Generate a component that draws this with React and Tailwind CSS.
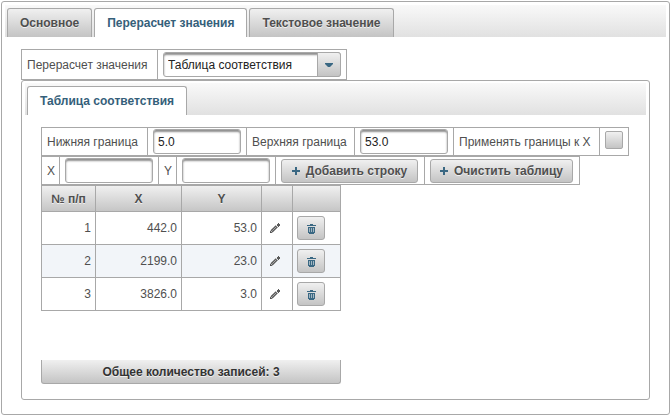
import { useState } from "react";
import clsx from "clsx";

const ROWS = [
  { id: 1, x: "442.0", y: "53.0" },
  { id: 2, x: "2199.0", y: "23.0" },
  { id: 3, x: "3826.0", y: "3.0" },
];

const TABS = ["Основное", "Перерасчет значения", "Текстовое значение"];

const PlusIcon = () => (
  <svg width="8" height="8" viewBox="0 0 8 8" fill="#3a6883" shapeRendering="crispEdges" className="mt-px shrink-0" aria-hidden="true">
    <path d="M3 0h2v3h3v2H5v3H3V5H0V3h3z" />
  </svg>
);

const PencilIcon = () => (
  <svg width="10" height="10" viewBox="0 0 10 10" aria-hidden="true">
    <path d="M1.6 8.4 6.8 3.2" stroke="#5a5a5a" strokeWidth="3" />
    <path d="M2.2 7.8 6.4 3.6" stroke="#b0b0b0" strokeWidth="0.9" />
    <path d="M0 10V7.4L2.6 10z" fill="#4f4f4f" />
    <path d="M7 1h1V0h1v1h1v2H9v1H8V3H7z" fill="#5a5a5a" />
  </svg>
);

const TrashIcon = () => (
  <svg width="9" height="10" viewBox="0 0 9 10" fill="#3a6883" shapeRendering="crispEdges" className="mt-0.5" aria-hidden="true">
    <path d="M3 0h3v1h3v1H0V1h3z" />
    <path d="M1 3h7v6H7v1H2V9H1z" />
    <path d="M2 4h1v4H2zM4 4h1v4H4zM6 4h1v4H6z" fill="#a3b6c1" />
  </svg>
);

function TabBar({ tabs, active, onSelect }) {
  return (
    <div role="tablist" className="flex h-8 items-end gap-0.5 bg-linear-to-b from-[#f9f9f9] to-[#e1e1e1] pl-0.5">
      {tabs.map((tab) => (
        <button
          key={tab}
          type="button"
          role="tab"
          aria-selected={tab === active}
          onClick={() => onSelect?.(tab)}
          className={clsx(
            "h-[29px] rounded-t-[3px] border border-b-0 border-[#a8a8a8] px-3 font-bold whitespace-nowrap",
            tab === active
              ? "bg-white text-[#35607a]"
              : "bg-linear-to-b from-[#f0f0f0] to-[#c4c4c4] text-[#4f4f4f] text-shadow-[0_1px_0_rgba(255,255,255,0.7)]"
          )}
        >
          {tab}
        </button>
      ))}
    </div>
  );
}

function Button({ className, children, ...props }) {
  return (
    <button
      type="button"
      className={clsx(
        "flex h-6 items-center justify-center rounded-[3px] border border-[#a8a8a8] bg-linear-to-b from-[#f0f0f0] to-[#c4c4c4] font-bold whitespace-nowrap text-[#4f4f4f] text-shadow-[0_1px_0_rgba(255,255,255,0.7)]",
        className
      )}
      {...props}
    >
      {children}
    </button>
  );
}

function FormRow({ children }) {
  return <div className="flex w-fit border-y border-l border-[#a8a8a8]">{children}</div>;
}

function Cell({ className, children }) {
  return (
    <div className={clsx("flex min-h-[27px] items-center border-r border-[#a8a8a8] px-[5px] py-px whitespace-nowrap", className)}>
      {children}
    </div>
  );
}

function TextInput(props) {
  return (
    <input
      type="text"
      className="h-[25px] w-[88px] rounded-[3px] border border-[#a8a8a8] bg-white px-1 text-[#222222] shadow-[inset_0_2px_2px_#8f8f8f] outline-none"
      {...props}
    />
  );
}

export default function App() {
  const [tab, setTab] = useState(TABS[1]);

  return (
    <div className="pt-px pl-px font-['Liberation_Sans',Arial,sans-serif] text-xs text-[#4f4f4f]">
      <div className="rounded-[3px] border border-[#a8a8a8] px-[3px] pt-[3px] pb-3.5">
        <TabBar tabs={TABS} active={tab} onSelect={setTab} />

        <div className="px-4 pt-3">
          <FormRow>
            <Cell className="w-[136px]">
              <label htmlFor="mode">Перерасчет значения</label>
            </Cell>
            <Cell className="h-[29px]">
              <div className="relative w-[178px]">
                <select
                  id="mode"
                  className="block h-[25px] w-full appearance-none rounded-[3px] border border-[#a8a8a8] bg-white pr-6 pl-1 text-[#222222] shadow-[inset_0_2px_2px_#8f8f8f] outline-none"
                >
                  <option>Таблица соответствия</option>
                </select>
                <span className="pointer-events-none absolute inset-y-0 right-0 flex w-6 items-center justify-center rounded-r-[3px] border border-[#a8a8a8] bg-linear-to-b from-[#f0f0f0] to-[#c4c4c4]">
                  <svg width="8" height="4" viewBox="0 0 8 4" fill="#3a6883" aria-hidden="true">
                    <path d="M0 0h8v1L5 4H3L0 1z" />
                  </svg>
                </span>
              </div>
            </Cell>
          </FormRow>

          <div className="rounded-[3px] border border-[#a8a8a8] px-[3px] pt-0.5 pb-[15px]">
            <TabBar tabs={["Таблица соответствия"]} active="Таблица соответствия" />

            <div className="px-4 pt-3">
              <FormRow>
                <Cell className="w-[106px]">
                  <label htmlFor="low">Нижняя граница</label>
                </Cell>
                <Cell>
                  <TextInput id="low" defaultValue="5.0" />
                </Cell>
                <Cell className="w-[108px]">
                  <label htmlFor="high">Верхняя граница</label>
                </Cell>
                <Cell>
                  <TextInput id="high" defaultValue="53.0" />
                </Cell>
                <Cell className="w-[146px]">
                  <label htmlFor="apply">Применять границы к X</label>
                </Cell>
                <Cell className="w-[29px]">
                  <input
                    id="apply"
                    type="checkbox"
                    className="mb-1 size-[18px] shrink-0 appearance-none rounded-[2px] border border-[#a8a8a8] bg-linear-to-b from-[#f0f0f0] to-[#c4c4c4]"
                  />
                </Cell>
              </FormRow>

              <FormRow>
                <Cell className="w-[18px]">
                  <label htmlFor="x">X</label>
                </Cell>
                <Cell>
                  <TextInput id="x" />
                </Cell>
                <Cell className="w-[18px]">
                  <label htmlFor="y">Y</label>
                </Cell>
                <Cell>
                  <TextInput id="y" />
                </Cell>
                <Cell className="w-[149px]">
                  <Button className="w-[137px] gap-1.5">
                    <PlusIcon />
                    Добавить строку
                  </Button>
                </Cell>
                <Cell className="w-[155px]">
                  <Button className="w-[143px] gap-1.5">
                    <PlusIcon />
                    Очистить таблицу
                  </Button>
                </Cell>
              </FormRow>

              <table className="w-[300px] table-fixed border-collapse [&_td]:border [&_td]:border-[#a8a8a8] [&_th]:border [&_th]:border-[#a8a8a8]">
                <colgroup>
                  <col className="w-[54px]" />
                  <col className="w-[86px]" />
                  <col className="w-20" />
                  <col className="w-[31px]" />
                  <col />
                </colgroup>
                <thead>
                  <tr className="h-[26px] bg-linear-to-b from-[#f0f0f0] to-[#c4c4c4] text-shadow-[0_1px_0_rgba(255,255,255,0.7)]">
                    <th>№ п/п</th>
                    <th>X</th>
                    <th>Y</th>
                    <th></th>
                    <th></th>
                  </tr>
                </thead>
                <tbody>
                  {ROWS.map((row) => (
                    <tr key={row.id} className="h-[33px] even:bg-[#f2f5f9]">
                      <td className="pr-1 text-right">{row.id}</td>
                      <td className="pr-1 text-right">{row.x}</td>
                      <td className="pr-1 text-right">{row.y}</td>
                      <td className="pl-2">
                        <button type="button" aria-label="Изменить" className="block">
                          <PencilIcon />
                        </button>
                      </td>
                      <td className="pl-1">
                        <Button aria-label="Удалить" className="w-7">
                          <TrashIcon />
                        </Button>
                      </td>
                    </tr>
                  ))}
                </tbody>
              </table>

              <div className="mt-[49px] flex h-6 w-[300px] items-center justify-center rounded-b-[3px] border border-t-0 border-[#a8a8a8] bg-linear-to-b from-[#f0f0f0] to-[#c4c4c4] font-bold text-[#333333] text-shadow-[0_1px_0_rgba(255,255,255,0.7)]">
                Общее количество записей: {ROWS.length}
              </div>
            </div>
          </div>
        </div>
      </div>
    </div>
  );
}
